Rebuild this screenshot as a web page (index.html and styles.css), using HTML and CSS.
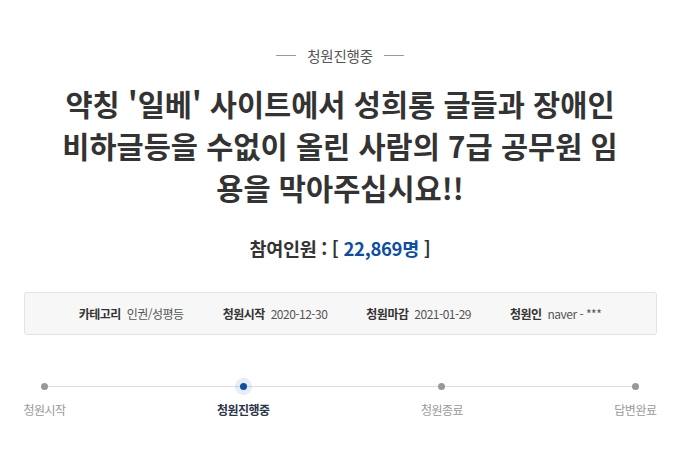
FILE: index.html
```html
<!DOCTYPE html>
<html lang="ko">
  <head>
    <meta charset="utf-8">
    <title>청원진행중</title>
    <link rel="stylesheet" href="styles.css">
  </head>
  <body>
    <div class="petition">
      <div class="stage"><span class="stage-text">청원진행중</span></div>
      <h1 class="title">약칭 '일베' 사이트에서 성희롱 글들과 장애인 비하글등을 수없이 올린 사람의 7급 공무원 임용을 막아주십시요!!</h1>
      <div class="count">참여인원 : [ <span class="num">22,869명</span> ]</div>

      <ul class="info">
        <li><b>카테고리</b> 인권/성평등</li>
        <li><b>청원시작</b> 2020-12-30</li>
        <li><b>청원마감</b> 2021-01-29</li>
        <li><b>청원인</b> naver - ***</li>
      </ul>

      <div class="steps">
        <div class="step"><span class="dot"></span><span class="label">청원시작</span></div>
        <div class="step on"><span class="dot"></span><span class="label">청원진행중</span></div>
        <div class="step"><span class="dot"></span><span class="label">청원종료</span></div>
        <div class="step"><span class="dot"></span><span class="label">답변완료</span></div>
      </div>
    </div>
  </body>
</html>
```

FILE: styles.css
```css
body {
  margin: 0;
  background: #ffffff;
  font-family: "Noto Sans CJK KR", "Noto Sans", sans-serif;
  color: #333;
}

.petition {
  width: 633px;
  margin: 0 auto;
  padding-top: 45px;
}

.stage {
  display: flex;
  justify-content: center;
  align-items: center;
  height: 20px;
}

.stage-text {
  font-size: 14.5px;
  color: #555;
  letter-spacing: -0.2px;
  display: flex;
  align-items: center;
  gap: 11px;
}

.stage-text::before,
.stage-text::after {
  content: '';
  width: 20px;
  height: 1px;
  background: #999;
}

.title {
  width: 566px;
  margin: 17px auto 0;
  font-size: 29.5px;
  line-height: 42px;
  font-weight: bold;
  text-align: center;
  color: #333;
}

.count {
  margin-top: 28px;
  line-height: 24px;
  text-align: center;
  font-size: 18.5px;
  font-weight: bold;
  color: #333;
  letter-spacing: -0.3px;
}

.num {
  color: #0d4ea5;
}

.info {
  list-style: none;
  margin: 32px 0 0;
  padding: 0;
  height: 41px;
  background: #f7f7f7;
  border: 1px solid #e3e3e3;
  border-radius: 3px;
  display: flex;
  justify-content: center;
  align-items: center;
  gap: 39px;
  font-size: 12px;
  color: #555;
  letter-spacing: -0.5px;
}

.info b {
  color: #333;
  margin-right: 3px;
}

.steps {
  position: relative;
  display: flex;
  justify-content: space-between;
  margin-top: 48px;
}

.steps::before {
  content: '';
  position: absolute;
  left: 20px;
  right: 21px;
  top: 3px;
  height: 1px;
  background: #dedede;
}

.step {
  display: flex;
  flex-direction: column;
  align-items: center;
  gap: 12px;
  position: relative;
  min-width: 42px;
}

.dot {
  width: 7px;
  height: 7px;
  border-radius: 50%;
  background: #999;
}

.label {
  font-size: 12px;
  color: #999;
  letter-spacing: -0.5px;
  line-height: 16px;
}

.step.on .dot {
  background: #0d4ea5;
  box-shadow: 0 0 0 5px rgba(13, 78, 165, 0.1);
}

.step.on .label {
  color: #2a3548;
  font-weight: bold;
}
```
